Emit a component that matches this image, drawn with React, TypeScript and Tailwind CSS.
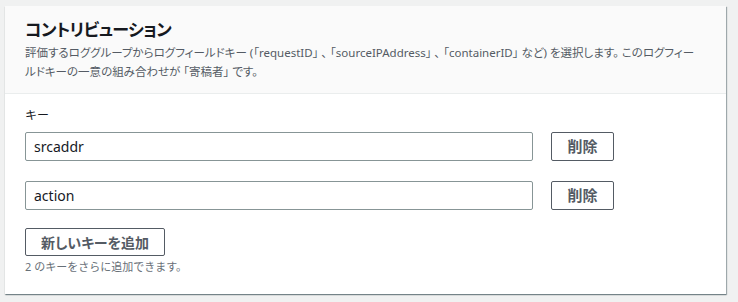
import React from 'react';

const font = "font-['Noto_Sans','Noto_Sans_CJK_JP',sans-serif]";

const KeyRow: React.FC<{ value: string }> = ({ value }) => (
  <div className="flex items-center gap-[18px]">
    <div className="w-[508px] h-[29px] border border-[#879596] rounded-[2px] px-[8px] flex items-center text-[14px] text-[#16191f] bg-white">
      {value}
    </div>
    <button className="w-[63px] h-[29px] border border-[#545b64] rounded-[2px] text-[15px] font-bold text-[#545b64] bg-white flex items-center justify-center [font-feature-settings:'palt']">
      削除
    </button>
  </div>
);

export default function App() {
  return (
    <div className={`w-[738px] h-[302px] bg-[#f0f1f1] pt-[6px] pl-[5px] ${font}`}>
      <div className="w-[721px] h-[288px] bg-white shadow-[1px_1px_1px_0_rgba(0,28,36,0.3),0_1px_1px_0_rgba(0,28,36,0.3)] flex flex-col">
        <div className="bg-[#fafafa] border-b border-[#eaeded] px-[20px] pt-[13px] pb-[12px] [font-feature-settings:'palt']">
          <h2 className="text-[17px] leading-[22px] font-bold text-[#16191f] tracking-[-0.6px]">コントリビューション</h2>
          <div className="text-[11.5px] leading-[19px] text-[#545b64] mt-[2px]">
            <p className="whitespace-nowrap">
              評価するロググループからログフィールドキー (「requestID」 、 「sourceIPAddress」 、 「containerID」 など) を選択します。 このログフィー
            </p>
            <p className="whitespace-nowrap">ルドキーの一意の組み合わせが 「寄稿者」 です。</p>
          </div>
        </div>
        <div className="px-[20px] pt-[12px] flex flex-col">
          <label className="text-[12px] leading-[20px] text-[#16191f]">キー</label>
          <div className="mt-[6px] flex flex-col gap-[20px]">
            <KeyRow value="srcaddr" />
            <KeyRow value="action" />
          </div>
          <div className="mt-[18px]">
            <button className="w-[140px] h-[28px] border border-[#545b64] rounded-[2px] text-[14px] font-bold text-[#545b64] bg-white flex items-center justify-center [font-feature-settings:'palt']">
              新しいキーを追加
            </button>
          </div>
          <p className="text-[11px] leading-[16px] text-[#687078] mt-[3px]">
            2 のキーをさらに追加できます。
          </p>
        </div>
      </div>
    </div>
  );
}
